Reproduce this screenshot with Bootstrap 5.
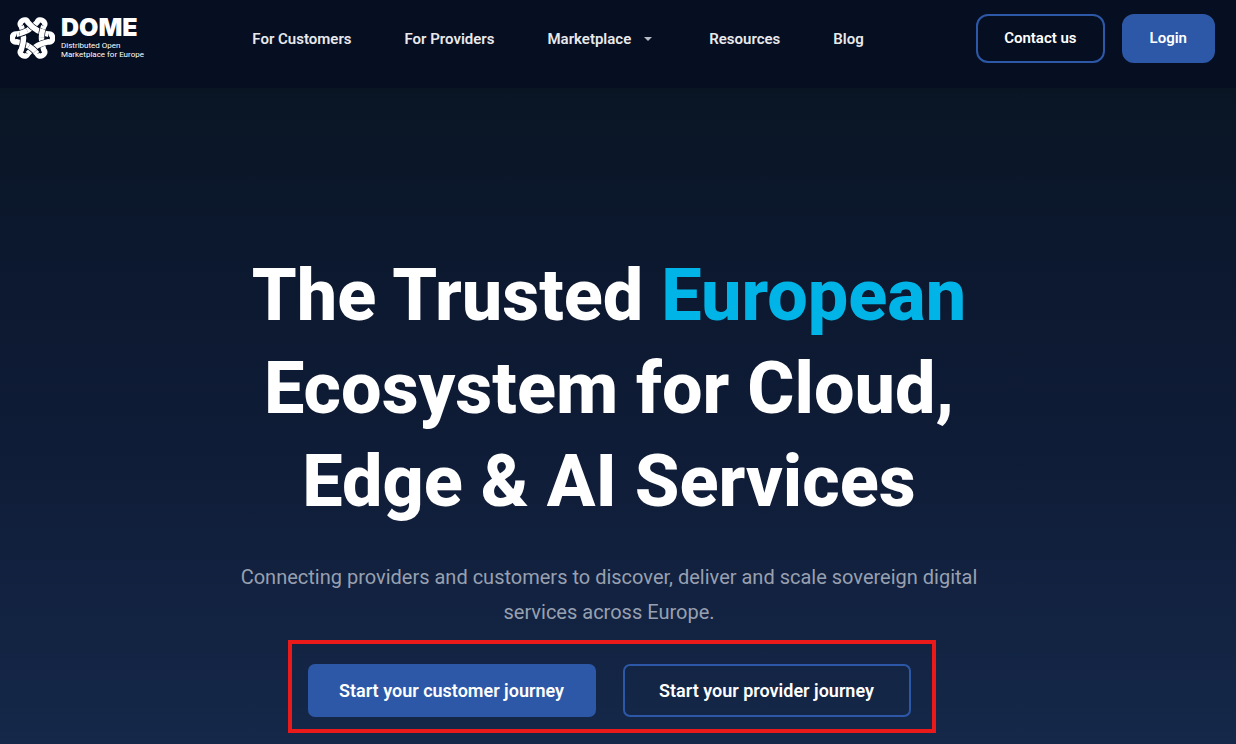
<!DOCTYPE html>
<html lang="en">
<head>
<meta charset="utf-8">
<meta name="viewport" content="width=device-width, initial-scale=1">
<title>DOME – Distributed Open Marketplace for Europe</title>
<link href="https://cdn.jsdelivr.net/npm/bootstrap@5.3.0/dist/css/bootstrap.min.css" rel="stylesheet">
<style>
  :root { --dome-blue: #2c58a7; --dome-cyan: #00b4e8; --dome-night: #060e22; }
  body {
    font-family: Roboto, "Liberation Sans", sans-serif;
    background: #0a1524;
    color: #fff;
  }
  .site-header { background: var(--dome-night); padding: 14px 21px 25px 10px; }
  .brand { gap: 6px; margin-right: -4px; }
  .brand-name { font: 900 25px/20px Inter, Roboto, sans-serif; }
  .brand-tag { font-size: 8px; line-height: 9px; font-weight: 400; }
  .main-menu { gap: 53px; }
  .main-menu a { color: #e8e9ec; font-size: 15px; line-height: 24px; font-weight: 600; }
  .main-menu .dropdown-toggle::after {
    margin-left: 13px; margin-right: 4px; vertical-align: 3px;
    border-top: 4px solid #b9bcc4; border-left-width: 4px; border-right-width: 4px;
  }
  .btn-dome {
    --bs-btn-color: #fff; --bs-btn-hover-color: #fff; --bs-btn-active-color: #fff;
    --bs-btn-bg: var(--dome-blue); --bs-btn-border-color: var(--dome-blue);
    --bs-btn-hover-bg: #3767bd; --bs-btn-hover-border-color: #3767bd;
    --bs-btn-border-width: 2px; --bs-btn-font-weight: 600;
  }
  .btn-dome-line { --bs-btn-bg: transparent; }
  .header-actions { gap: 17px; }
  .btn-top { --bs-btn-border-radius: 12px; --bs-btn-font-size: 15px; --bs-btn-padding-y: 10px; --bs-btn-padding-x: 26px; line-height: 25px; }
  .btn-hero { --bs-btn-border-radius: 7px; --bs-btn-font-size: 18px; --bs-btn-padding-y: 12px; line-height: 25px; width: 288px; }
  .hero {
    min-height: calc(100vh - 88px);
    padding: 161px 18px 26px 0;
    background: linear-gradient(#0a1524, #0c182e 25%, #0f1c37 55%, #152849);
  }
  .hero h1 { font-size: 72px; line-height: 93px; font-weight: 800; }
  .hero h1 em { font-style: normal; color: var(--dome-cyan); }
  .hero-text { max-width: 768px; font-size: 20px; line-height: 35px; color: #98a0b0; margin: 32px 0 34px; }
  .hero-actions { gap: 27px; }
  .hero-actions::before {
    content: ""; position: absolute; inset: -24px -25px -16px -20px;
    border: 4px solid #ea1a1b; pointer-events: none;
  }
</style>
</head>
<body>
<header class="site-header d-flex align-items-start justify-content-between">
  <a href="#" class="brand d-flex align-items-center text-white text-decoration-none">
    <svg width="45" height="48" viewBox="-24 -25 48 50" fill="none" aria-hidden="true">
      <defs>
        <path id="arm" d="M-17-4Q-3.600-6.200 5-16.700C6.600-22.800 16.400-17 12-12.700"/>
        <g id="loop"><use href="#arm"/><use href="#arm" transform="rotate(120)"/><use href="#arm" transform="rotate(240)"/></g>
        <path id="over" pathLength="100" stroke-dasharray="0 12 34 100" d="M-17-4Q-3.600-6.200 5-16.700"/>
        <g id="overs"><use href="#over"/><use href="#over" transform="rotate(120)"/><use href="#over" transform="rotate(240)"/></g>
      </defs>
      <use href="#loop" stroke="#fff" stroke-width="5.800"/>
      <g transform="scale(-1 1)">
        <use href="#loop" stroke="#060e22" stroke-width="7.200"/>
        <use href="#loop" stroke="#fff" stroke-width="5.800"/>
      </g>
      <use href="#overs" stroke="#060e22" stroke-width="7.200"/>
      <use href="#overs" stroke="#fff" stroke-width="5.800"/>
    </svg>
    <span>
      <span class="brand-name d-block">DOME</span>
      <span class="brand-tag d-block mt-1">Distributed Open<br>Marketplace for Europe</span>
    </span>
  </a>
  <nav class="align-self-center" aria-label="Main">
    <ul class="main-menu list-unstyled d-flex mb-0">
      <li><a class="text-decoration-none" href="#">For Customers</a></li>
      <li><a class="text-decoration-none" href="#">For Providers</a></li>
      <li class="dropdown"><a class="dropdown-toggle text-decoration-none" href="#" data-bs-toggle="dropdown">Marketplace</a></li>
      <li><a class="text-decoration-none" href="#">Resources</a></li>
      <li><a class="text-decoration-none" href="#">Blog</a></li>
    </ul>
  </nav>
  <div class="header-actions d-flex">
    <button type="button" class="btn btn-dome btn-dome-line btn-top">Contact us</button>
    <button type="button" class="btn btn-dome btn-top">Login</button>
  </div>
</header>
<main class="hero d-flex flex-column align-items-center text-center">
  <h1 class="mb-0">The Trusted <em>European</em><br>Ecosystem for Cloud,<br>Edge &amp; AI Services</h1>
  <p class="hero-text">Connecting providers and customers to discover, deliver and scale sovereign digital services across Europe.</p>
  <div class="hero-actions position-relative d-flex">
    <button type="button" class="btn btn-dome btn-hero">Start your customer journey</button>
    <button type="button" class="btn btn-dome btn-dome-line btn-hero">Start your provider journey</button>
  </div>
</main>
<script src="https://cdn.jsdelivr.net/npm/bootstrap@5.3.0/dist/js/bootstrap.bundle.min.js"></script>
</body>
</html>
